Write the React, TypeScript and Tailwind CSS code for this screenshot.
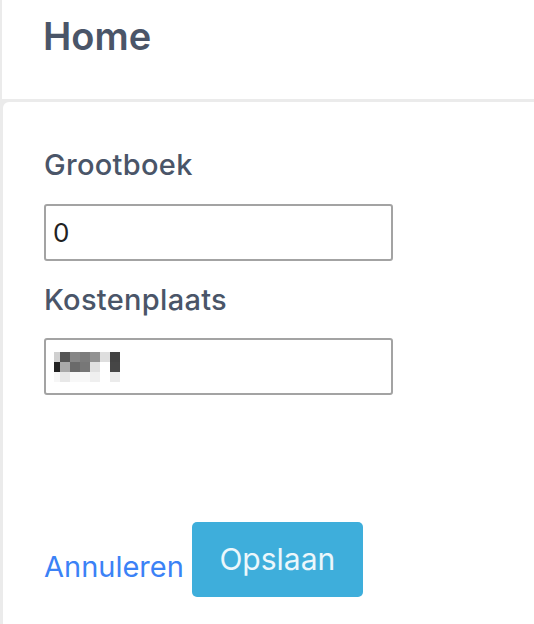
const mosaic: string[][] = [
  ['#d0d0d0', '#555555', '#868686', '#7c7c7c', '#929292', '#dedede', '#434343'],
  ['#222222', '#aaaaaa', '#6a6a6a', '#777777', '#e0e0e0', '#ffffff', '#464646'],
  ['#f6f6f6', '#e8e8e8', '#f8f8f8', '#f8f8f8', '#efefef', '#ffffff', '#ebebeb'],
];

function Redacted() {
  return (
    <div className="flex flex-col">
      {mosaic.map((row, r) => (
        <div key={r} className="flex h-[10px]">
          {row.map((c, i) => (
            <div key={i} className={i === 0 ? 'w-[6px]' : 'w-[10px]'} style={{ backgroundColor: c }} />
          ))}
        </div>
      ))}
    </div>
  );
}

export default function App() {
  return (
    <div className="min-h-screen bg-[#ebebeb] font-['Inter',sans-serif]">
      {/* Header */}
      <header className="ml-[2px] h-[99px] bg-white pl-[41px] pt-[16px]">
        <h1 className="text-[38px] leading-[40px] font-semibold text-[#4a5568]">Home</h1>
      </header>

      {/* Form card */}
      <main className="mt-[3px] ml-[3px] min-h-[522px] rounded-tl-[6px] bg-white pl-[41px] pt-[45px]">
        <label className="block text-[29px] leading-[36px] tracking-[0.3px] font-medium text-[#4a5568]">Grootboek</label>
        <div className="mt-[21px] flex h-[57px] w-[349px] items-center rounded-[3px] border-2 border-[#a3a3a3] px-[7px] text-[26px] text-[#222]">
          0
        </div>

        <label className="mt-[21px] block text-[29px] leading-[36px] tracking-[0.3px] font-medium text-[#4a5568]">Kostenplaats</label>
        <div className="mt-[20px] flex h-[57px] w-[349px] items-center rounded-[3px] border-2 border-[#a3a3a3] px-[8px]">
          <Redacted />
        </div>

        <div className="mt-[127px] flex items-center gap-[8px]">
          <a className="pt-[14px] text-[29px] text-[#3b82f6]">Annuleren</a>
          <button className="h-[75px] w-[171px] rounded-[5px] bg-[#3eaedb] text-[30px] text-white/90">Opslaan</button>
        </div>
      </main>
    </div>
  );
}
